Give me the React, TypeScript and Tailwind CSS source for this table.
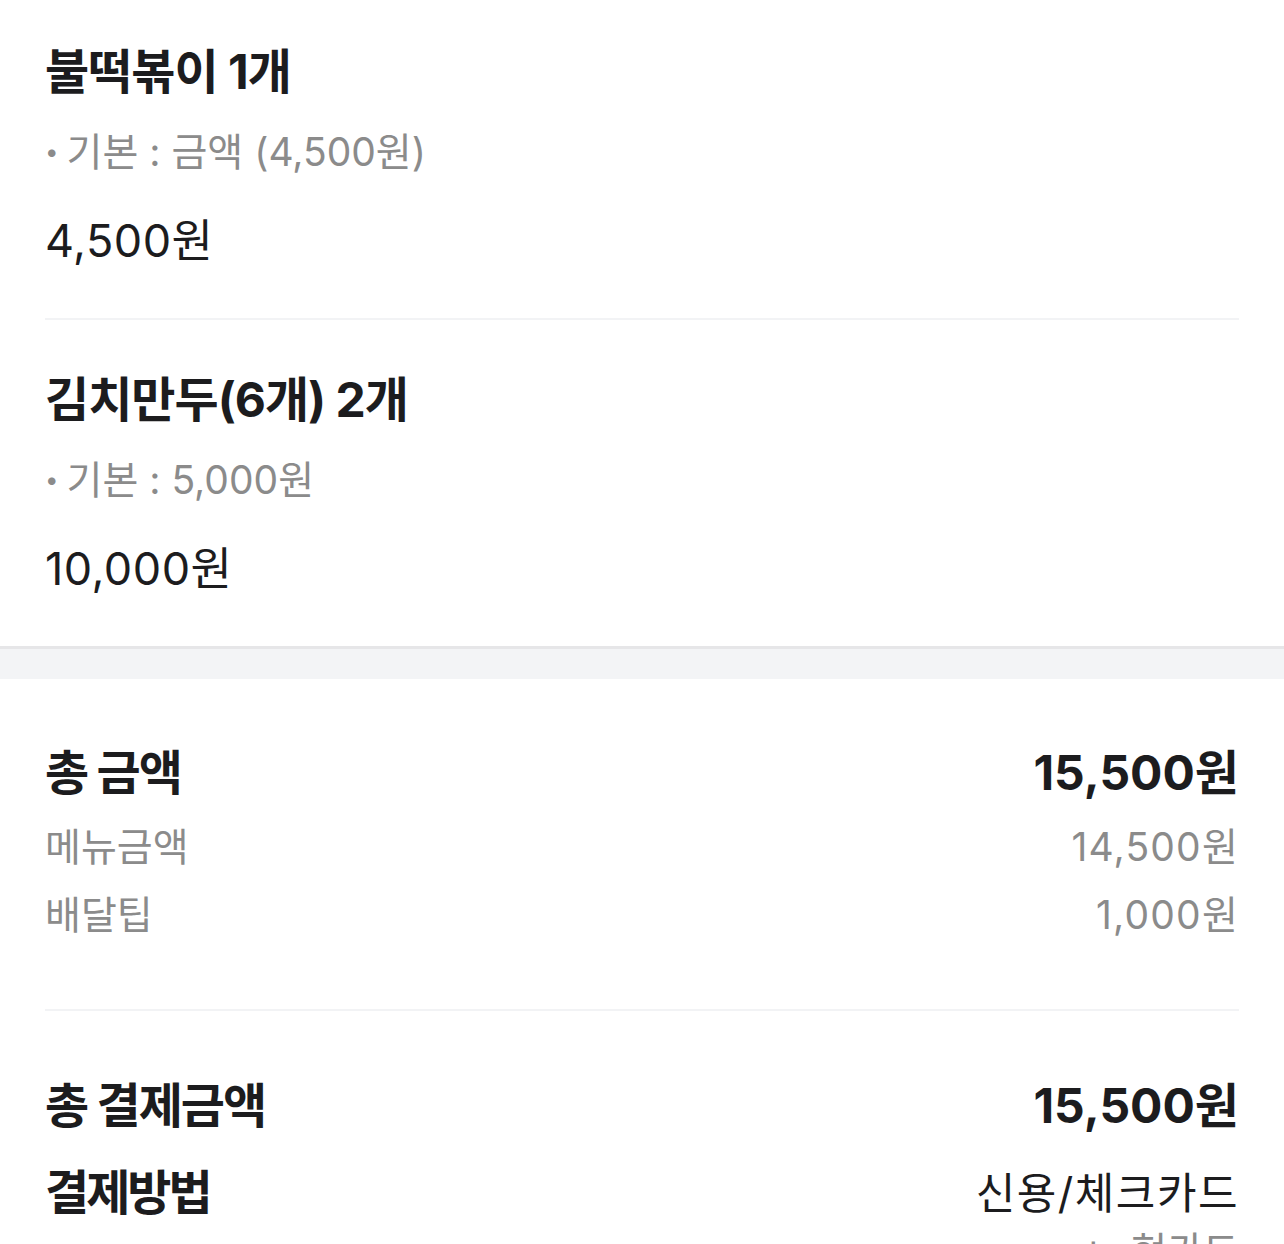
import React from 'react';

const font = "font-['Inter','Noto_Sans_CJK_KR',sans-serif]";

type Item = { name: string; option: string; price: string };

const items: Item[] = [
  { name: '불떡볶이 1개', option: '기본 : 금액 (4,500원)', price: '4,500원' },
  { name: '김치만두(6개) 2개', option: '기본 : 5,000원', price: '10,000원' },
];

const OrderItem = ({ item, first }: { item: Item; first: boolean }) => (
  <div className={`${first ? 'pt-[42px]' : 'pt-[50px]'} pb-[47px]`}>
    <div className="text-[48px] leading-[60px] font-bold text-[#1c1c1e] tracking-[-1px]">{item.name}</div>
    <div className="mt-[20px] flex items-center text-[39px] leading-[60px] text-[#8b8b8b]">
      <span className="mr-[8px] text-[24px]">•</span>
      <span>{item.option}</span>
    </div>
    <div className="mt-[29px] text-[45px] leading-[60px] tracking-[0.5px] text-[#1c1c1e]">{item.price}</div>
  </div>
);

const Row = ({ label, value, strong }: { label: string; value: string; strong?: boolean }) => (
  <div
    className={`flex justify-between ${
      strong
        ? 'text-[48px] leading-[60px] font-bold text-[#1c1c1e]'
        : 'text-[39px] leading-[68px] text-[#8b8b8b]'
    }`}
  >
    <span className={strong ? 'tracking-[-2px]' : ''}>{label}</span>
    <span className={strong ? '' : 'tracking-[1.2px]'}>{value}</span>
  </div>
);

export default function App() {
  return (
    <div className={`${font} w-[1284px] h-[1244px] overflow-hidden bg-white`}>
      <div className="px-[45px]">
        {items.map((item, i) => (
          <div key={item.name} className={i > 0 ? 'border-t-2 border-[#f2f3f5]' : ''}>
            <OrderItem item={item} first={i === 0} />
          </div>
        ))}
      </div>

      <div className="h-[33px] border-t-[3px] border-[#e6e6e8] bg-[#f3f4f6]" />

      <div className="px-[45px]">
        <div className="pt-[64px] pb-[60px]">
          <Row label="총 금액" value="15,500원" strong />
          <div className="mt-[10px]">
            <Row label="메뉴금액" value="14,500원" />
            <Row label="배달팁" value="1,000원" />
          </div>
        </div>

        <div className="border-t-2 border-[#f2f3f5] pt-[65px]">
          <Row label="총 결제금액" value="15,500원" strong />
          <div className="mt-[27px] flex justify-between">
            <span className="text-[48px] leading-[60px] font-bold tracking-[-3px] text-[#1c1c1e]">결제방법</span>
            <div className="flex flex-col items-end">
              <span className="text-[43px] leading-[60px] tracking-[1.5px] text-[#1c1c1e]">신용/체크카드</span>
              <span className="text-[39px] leading-[56px] text-[#8b8b8b]">ㄴ 현카드</span>
            </div>
          </div>
        </div>
      </div>
    </div>
  );
}
